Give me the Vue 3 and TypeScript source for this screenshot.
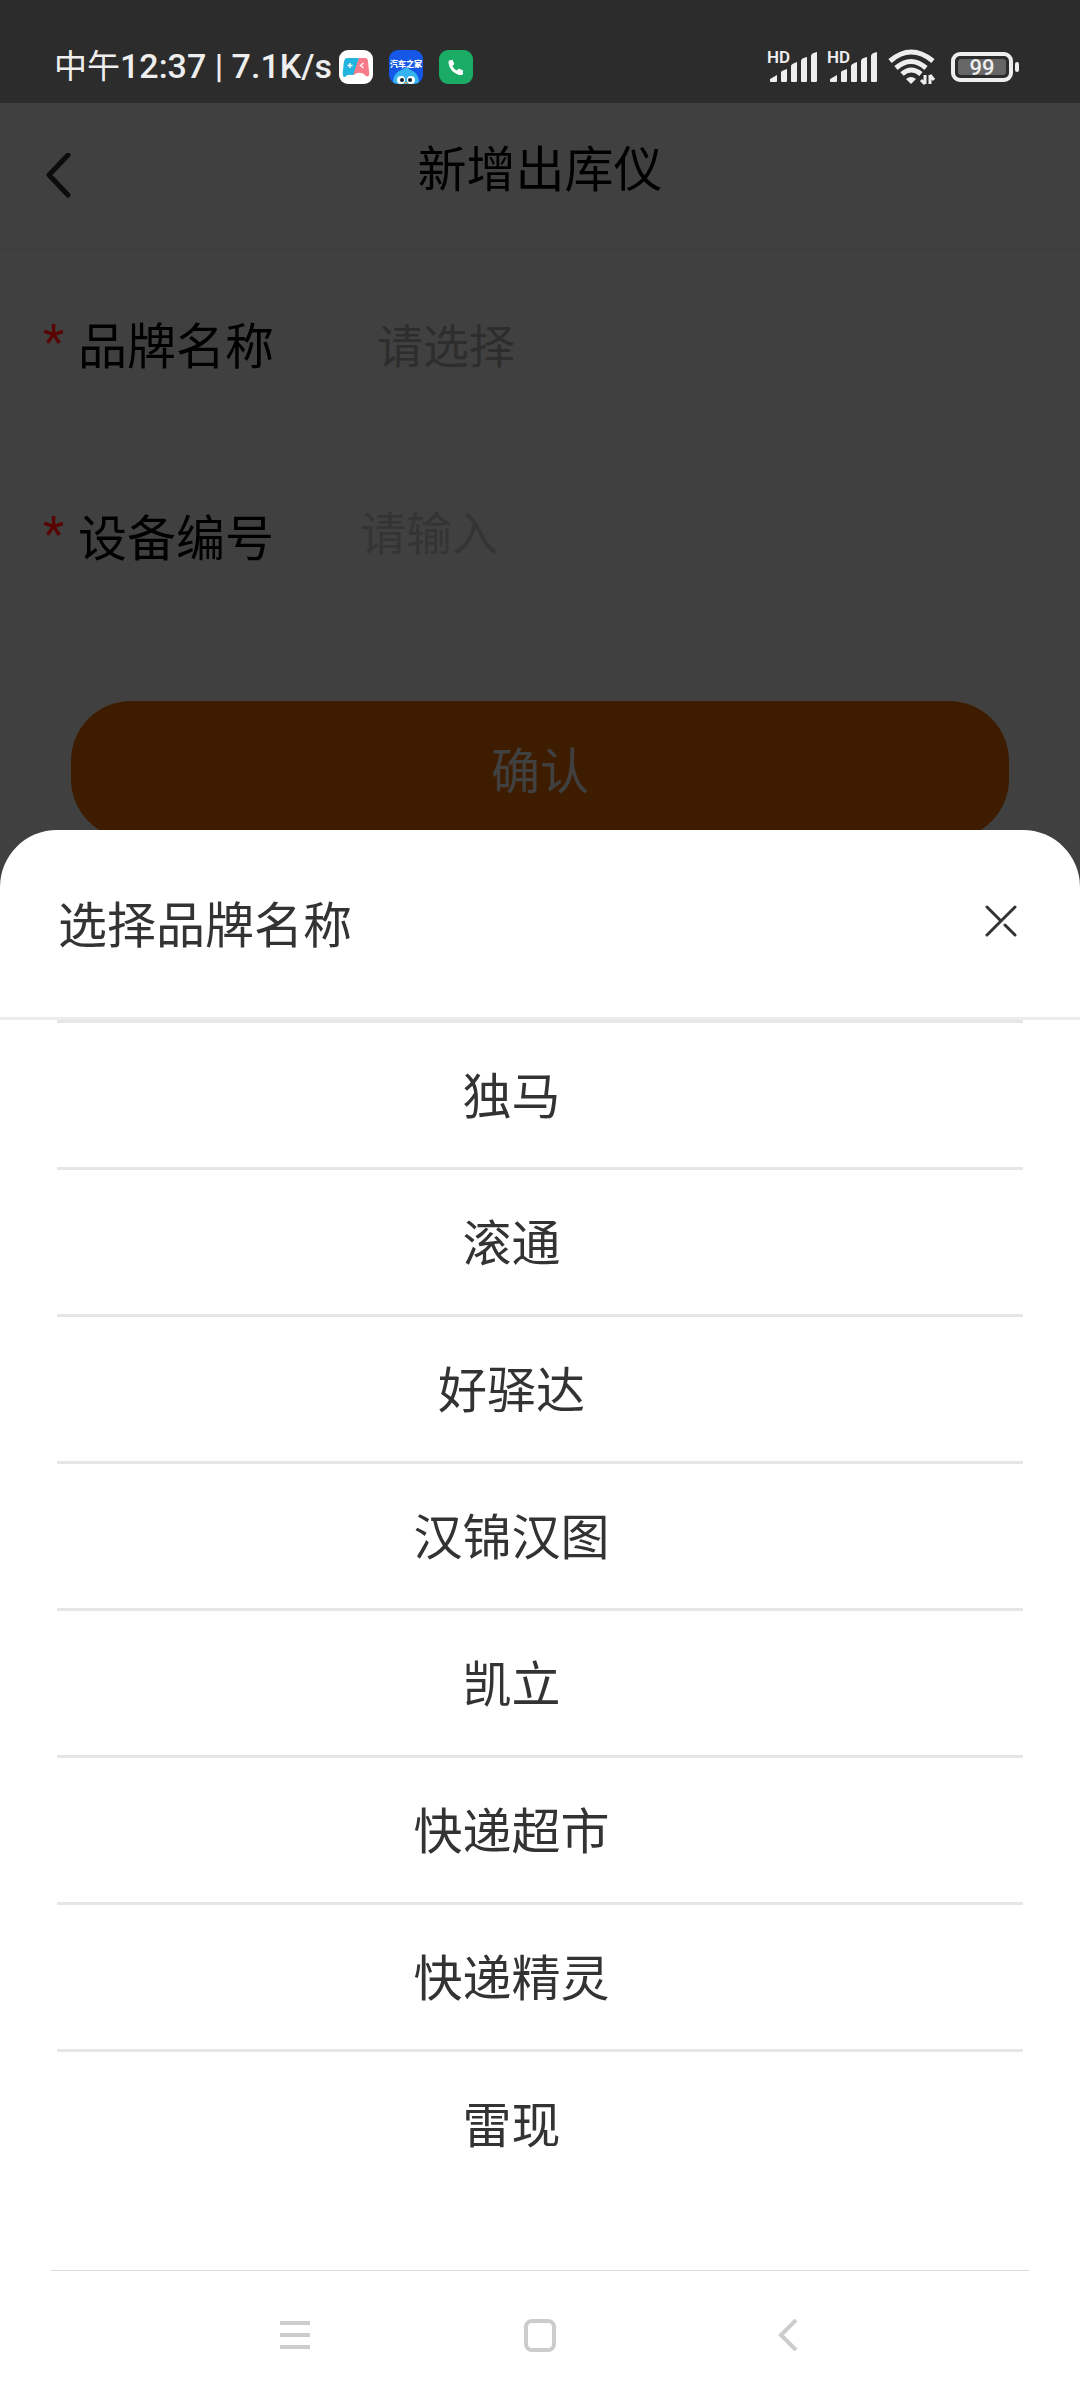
<script setup lang="ts">
import { ref } from 'vue'

const brands: string[] = ['独马', '滚通', '好驿达', '汉锦汉图', '凯立', '快递超市', '快递精灵', '雷现']
const brand = ref('')
const deviceNo = ref('')
const signals = [0, 1]
</script>

<template>
  <div class="screen">
    <header class="status">
      <div class="status-left">
        <span class="clock">中午<b>12:37 | 7.1K/s</b></span>
        <svg class="app-icon" viewBox="0 0 34 34" aria-hidden="true">
          <rect width="34" height="34" rx="9" fill="#fff" />
          <path d="M8 8h12l-5 17H13Q8 24 6 27Q3 28 4 20L5 11Q6 8 8 8z" fill="#22b5e0" />
          <path d="M20 8h6q3 0 3 4l1 9q1 7-3 5-5-6-13-1z" fill="#f77b88" />
          <path d="M8.500 15.500h5M11 13v5M24.500 13l-3 2.500 3 2.500" fill="none" stroke="#fff" stroke-width="1.300" />
        </svg>
        <svg class="app-icon" viewBox="0 0 34 34" aria-hidden="true">
          <defs><clipPath id="tile"><rect width="34" height="34" rx="9" /></clipPath></defs>
          <g clip-path="url(#tile)">
            <rect width="34" height="34" fill="#1557e6" />
            <circle cx="17" cy="32" r="13" fill="#35b4f0" />
            <path d="M14 20q1-3 4-2 3 0 3 3z" fill="#35b4f0" />
            <circle cx="12" cy="30" r="4" fill="#fff" />
            <circle cx="22" cy="30" r="4" fill="#fff" />
            <circle cx="13" cy="30" r="2" fill="#123" />
            <circle cx="21" cy="30" r="2" fill="#123" />
            <path d="M15.500 32h3l-1.500 2z" fill="#f7a020" />
          </g>
          <text x="17" y="17" text-anchor="middle" font-size="8" font-weight="900" fill="#fff">汽车之家</text>
        </svg>
        <svg class="app-icon" viewBox="0 0 34 34" aria-hidden="true">
          <rect width="34" height="34" rx="9" fill="#1aab64" />
          <path d="M10 10.500l3.500-.8 1.800 4.300-2 2q1.500 3 4.500 4.600l2-2 4.300 1.900-.2 3.700q-1.200 1.200-3.900.7Q11 22 9.600 13.500q-.2-2 .4-3z" fill="#fff" />
        </svg>
      </div>
      <div class="status-right">
        <svg v-for="s in signals" :key="s" class="signal" viewBox="0 0 52 42" aria-hidden="true">
          <text x="0" y="17" font-size="17" font-weight="600" fill="#eee">HD</text>
          <path d="M3 33l7-4v6q0 1-1 1H4q-1 0-1-1zM14 26q0-1 6-3v12q0 1-1 1h-4q-1 0-1-1zM24 20q0-2 6-4v19q0 1-1 1h-4q-1 0-1-1zM34 15q0-3 6-4v24q0 1-1 1h-4q-1 0-1-1zM44 10q0-3 6-4v29q0 1-1 1h-4q-1 0-1-1z" fill="#eee" />
        </svg>
        <svg class="wifi" viewBox="0 0 48 36" aria-hidden="true">
          <g fill="none" stroke="#eee" stroke-width="5">
            <path d="M2 12Q23-6 45 12" />
            <path d="M8 19Q23 6 38 19" />
            <path d="M14 25Q23 17 33 25" />
          </g>
          <path d="M18 30q5-4 10 0l-5 5z" fill="#eee" />
          <path d="M37 26v9M37 35l-4-4M42 35v-9M42 26l4 5" fill="none" stroke="#eee" stroke-width="3" />
        </svg>
        <svg class="battery" viewBox="0 0 68 30" aria-hidden="true">
          <rect x="2" y="2" width="58" height="26" rx="7" fill="none" stroke="#eee" stroke-width="4" />
          <rect x="7" y="7" width="48" height="16" rx="3" fill="#666" />
          <rect x="64" y="10" width="4" height="10" rx="2" fill="#eee" />
          <text x="31" y="23" text-anchor="middle" font-size="22" font-weight="500" fill="#eee">99</text>
        </svg>
      </div>
    </header>

    <main class="page">
      <div class="topbar">
        <button class="back" type="button" aria-label="返回">
          <svg viewBox="0 0 28 46" aria-hidden="true"><path d="M24 2L5 22l19 20" fill="none" stroke="#333" stroke-width="5" stroke-linecap="round" stroke-linejoin="round" /></svg>
        </button>
        <h1>新增出库仪</h1>
      </div>
      <form class="form" @submit.prevent>
        <div class="field">
          <span class="star">*</span>
          <label for="brand">品牌名称</label>
          <input id="brand" v-model="brand" class="pick" placeholder="请选择" readonly />
        </div>
        <div class="field">
          <span class="star">*</span>
          <label for="device">设备编号</label>
          <input id="device" v-model="deviceNo" class="entry" placeholder="请输入" />
        </div>
        <button class="confirm" type="submit">确认</button>
      </form>
      <div class="mask"></div>
    </main>

    <section class="sheet" role="dialog" aria-labelledby="sheet-title">
      <div class="sheet-head">
        <h2 id="sheet-title">选择品牌名称</h2>
        <button class="close" type="button" aria-label="关闭">
          <svg viewBox="0 0 32 32" aria-hidden="true"><path d="M2 2l14 14M20 20l10 10M30 2L2 30" fill="none" stroke="#333" stroke-width="3" stroke-linecap="round" /></svg>
        </button>
      </div>
      <ul class="brands">
        <li v-for="b in brands" :key="b"><button type="button" @click="brand = b">{{ b }}</button></li>
      </ul>
      <nav class="sysnav">
        <button type="button" aria-label="最近任务">
          <svg viewBox="0 0 34 34" aria-hidden="true"><path d="M3 4h30M3 16h30M3 28h30" stroke="#ccc" stroke-width="4" /></svg>
        </button>
        <button type="button" aria-label="主屏幕">
          <svg viewBox="0 0 34 34" aria-hidden="true"><rect x="3" y="2" width="28" height="29" rx="6" fill="none" stroke="#ccc" stroke-width="4" /></svg>
        </button>
        <button type="button" aria-label="返回上一级">
          <svg viewBox="0 0 34 34" aria-hidden="true"><path d="M27 1L12 16l15 15" fill="none" stroke="#ccc" stroke-width="4" /></svg>
        </button>
      </nav>
    </section>
  </div>
</template>

<style>
body {
  margin: 0;
}
</style>

<style scoped>
.screen {
  position: relative;
  display: flex;
  flex-direction: column;
  min-height: 100vh;
  overflow: hidden;
  background: #fff;
  font-family: Roboto, "Noto Sans CJK SC", sans-serif;
  font-size: 49px;
  color: #333;
}
button {
  padding: 0;
  border: 0;
  background: none;
  font: inherit;
  color: inherit;
}
svg {
  display: block;
}
h1,
h2 {
  margin: 0;
  font-size: 49px;
  font-weight: 400;
  line-height: 72px;
}
.status {
  display: flex;
  justify-content: space-between;
  align-items: center;
  box-sizing: border-box;
  height: 103px;
  padding: 30px 61px 0 54px;
  background: #2c2c2c;
  color: #eee;
}
.status-left,
.status-right {
  display: flex;
  align-items: center;
}
.status-left {
  gap: 16px;
}
.status-right {
  gap: 8px;
}
.clock {
  margin-right: -9px;
  font-size: 33px;
  line-height: 40px;
  white-space: nowrap;
}
.clock b {
  font-weight: 500;
  font-size: 34px;
}
.app-icon {
  width: 34px;
  height: 34px;
}
.signal {
  width: 52px;
  height: 42px;
}
.wifi {
  width: 48px;
  height: 36px;
  margin: 0 7px 0 1px;
}
.battery {
  width: 68px;
  height: 30px;
}
.page {
  position: relative;
  flex: 1;
  color: #000;
}
.topbar {
  display: grid;
  grid-template-columns: 120px 1fr 120px;
  align-items: center;
  height: 145px;
  border-bottom: 2px solid #f6f6f6;
}
.topbar h1 {
  padding-bottom: 10px;
  text-align: center;
}
.back svg {
  width: 28px;
  height: 46px;
  margin-left: 44px;
}
.field {
  display: flex;
  align-items: center;
  height: 192px;
  padding: 0 43px;
}
.field + .field {
  border-bottom: 2px solid #f6f6f6;
}
.star {
  position: relative;
  z-index: 1;
  width: 35px;
  padding-bottom: 10px;
  color: #5a0303;
}
.field label {
  width: 241px;
  padding-bottom: 8px;
}
.field input {
  flex: 1;
  min-width: 0;
  padding: 2px 0 0 58px;
  border: 0;
  background: none;
  outline: 0;
  font: inherit;
  font-size: 46px;
}
.field .entry {
  padding: 0 0 8px 41px;
}
.field input::placeholder {
  color: #b4b4b4;
  opacity: 1;
}
.field .entry::placeholder {
  color: #d0d0d0;
}
.confirm {
  display: block;
  width: calc(100% - 142px);
  height: 138px;
  margin: 65px auto 0;
  padding-bottom: 6px;
  border-radius: 60px;
  background: #f87000;
  color: #fff;
}
.mask {
  position: absolute;
  inset: 0;
  background: rgba(0, 0, 0, 0.75);
}
.sheet {
  position: absolute;
  right: 0;
  bottom: 0;
  left: 0;
  z-index: 2;
  border-radius: 57px 57px 0 0;
  background: #fff;
}
.sheet-head {
  display: flex;
  justify-content: space-between;
  align-items: center;
  height: 187px;
  padding: 0 63px 0 58px;
  border-bottom: 3px solid #ececec;
}
.sheet-head h2 {
  padding-top: 6px;
}
.close {
  padding-bottom: 6px;
}
.close svg {
  width: 32px;
  height: 32px;
}
.brands {
  margin: 0 57px;
  padding: 0 0 74px;
  list-style: none;
}
.brands li {
  border-top: 3px solid #e6e6e6;
}
.brands button {
  display: block;
  width: 100%;
  height: 144px;
  padding: 0 57px 5px 0;
}
.sysnav {
  display: flex;
  justify-content: center;
  align-items: center;
  gap: 212px;
  height: 129px;
  margin: 0 51px;
  border-top: 1px solid #ddd;
}
.sysnav svg {
  width: 34px;
  height: 34px;
}
</style>
